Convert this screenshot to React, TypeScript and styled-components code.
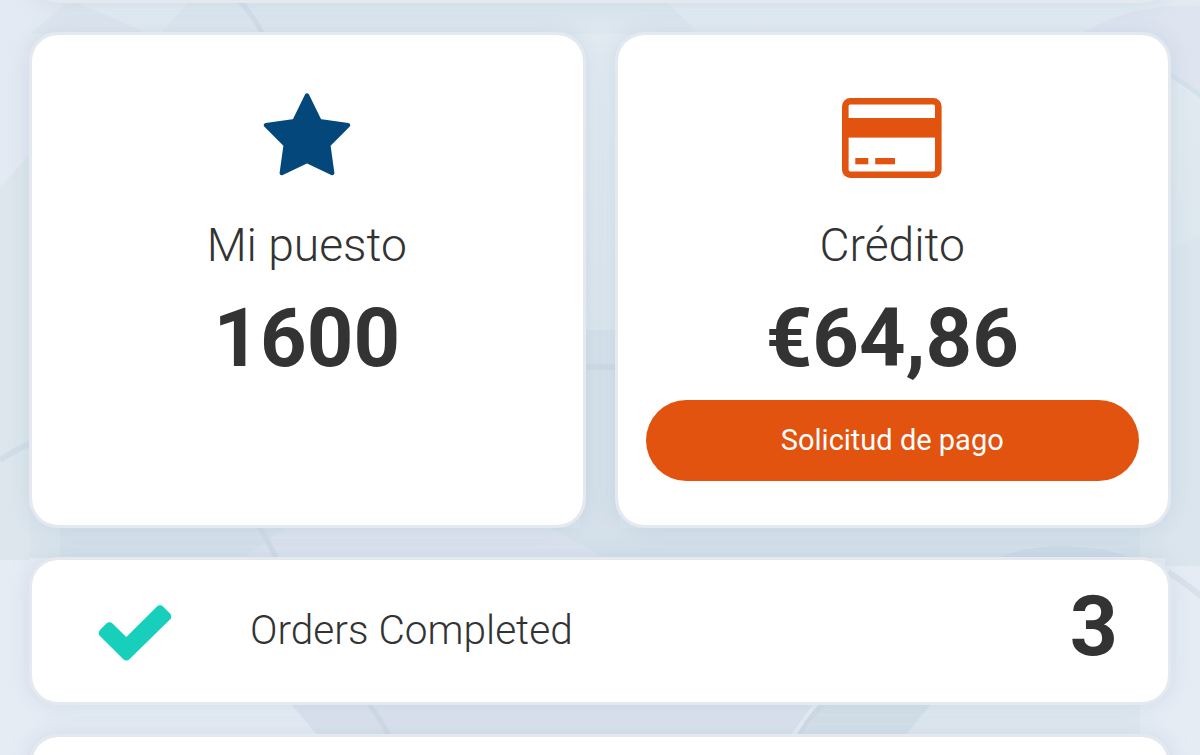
import React from 'react';
import styled, { createGlobalStyle } from 'styled-components'


const GlobalStyle = createGlobalStyle`
    body {
        margin: 0;
        overflow: hidden;
        background: #dae4ed;
        font-family: Roboto, "Liberation Sans", sans-serif;
        color: #333;
    }
`

function Backdrop() {
    return (
        <BackdropSvg viewBox="0 0 1200 755" preserveAspectRatio="none">
            <defs>
                <linearGradient id="base" x1="0" y1="0" x2="0" y2="1">
                    <stop offset="0" stopColor="#e3ebf2" />
                    <stop offset="0.5" stopColor="#dde7ee" />
                    <stop offset="1" stopColor="#d9e4ec" />
                </linearGradient>
            </defs>
            <rect width="1200" height="560" fill="url(#base)" />
            <rect y="558" width="1200" height="197" fill="#e5ecf4" />

            {/* top strip */}
            <path d="M0 0H70L148 34H30V154L0 188Z" fill="#e3eaf3" />
            <path d="M70 0L150 34H30Z" fill="#dee6ef" />
            <path d="M190 0L160 34H700L664 0Z" fill="#dde7ef" />
            <path d="M239 0Q252 14 264 36" stroke="#d3dee8" strokeWidth="5" fill="none" />
            <path d="M1080 34Q1135 2 1200 6V92L1168 74Z" fill="#dee5f0" />
            <path d="M1168 74Q1184 82 1202 97" stroke="#d5e1ea" strokeWidth="5" fill="none" />

            {/* side and middle columns */}
            <path d="M0 188L30 154V560H0Z" fill="#dde6ed" />
            <path d="M0 460Q18 448 32 443" stroke="#d1dee8" strokeWidth="6" fill="none" />
            <rect x="580" y="330" width="40" height="200" fill="#d6e1ea" />
            <rect x="580" y="364" width="40" height="6" fill="#cfdbe5" />
            <path d="M1168 250L1200 235V560H1168Z" fill="#dbe5ed" />

            {/* strip under the two cards */}
            <path d="M60 528H1140V558H60Z" fill="#d5e1ea" />
            <path d="M290 525L240 560H610L545 525Z" fill="#dce3ee" />
            <path d="M258 525Q268 540 278 562" stroke="#d0dbe6" strokeWidth="5" fill="none" />
            <path d="M990 560Q1060 532 1140 560Z" fill="#cddbe7" />
            <path d="M1165 556H1200V566H1165Z" fill="#dbe5ed" />
            <path d="M1168 572Q1184 582 1202 597" stroke="#d9e1ec" strokeWidth="6" fill="none" />

            {/* strip under the orders row */}
            <path d="M290 703L318 736H790L814 703Z" fill="#dae2ed" />
            <path d="M368 703Q380 718 390 738" stroke="#d0dbe6" strokeWidth="5" fill="none" />
            <path d="M824 703L800 738H904L932 703Z" fill="#d4e0e9" />
            <path d="M824 703Q808 718 798 738" stroke="#d0dbe6" strokeWidth="5" fill="none" />
            <path d="M932 703L904 738H1140V703Z" fill="#dfe8f0" />
        </BackdropSvg>
    )
}

function StarIcon() {
    return (
        <svg width="88" height="84" viewBox="0 0 88 84">
            <path
                d="M44 3.500L56.600 29.300L85 33.300L65.300 53L69.200 81L44 69L18.800 81L22.700 53L3 33.300L31.400 29.300Z"
                fill="#04477b"
                stroke="#04477b"
                strokeWidth="4.400"
                strokeLinejoin="round"
            />
        </svg>
    )
}

function CreditIcon() {
    return (
        <svg width="100" height="80" viewBox="0 0 100 80" fill="#e2530f">
            <rect x="3.300" y="3.300" width="93" height="73.400" rx="5" fill="none" stroke="#e2530f" strokeWidth="6.600" />
            <rect x="3" y="20" width="94" height="19.600" />
            <rect x="13.300" y="60" width="13" height="6.300" />
            <rect x="33.200" y="60" width="19.800" height="6.300" />
        </svg>
    )
}

function CheckIcon() {
    return (
        <svg width="74" height="58" viewBox="0 0 74 58">
            <path
                d="M5 29L11.500 22.500L28.400 39L62 5.500L69 12.500L28.400 52.300Z"
                fill="#17cfbb"
                stroke="#17cfbb"
                strokeWidth="8.600"
                strokeLinejoin="round"
            />
        </svg>
    )
}

function App() {
    return (
        <Page>
            <GlobalStyle />
            <Backdrop />
            <EdgeCard $side="top" />
            <CardGrid>
                <StatCard>
                    <IconBox $lift={4}><StarIcon /></IconBox>
                    <StatTitle>Mi puesto</StatTitle>
                    <StatValue>1600</StatValue>
                </StatCard>
                <StatCard>
                    <IconBox $lift={0}><CreditIcon /></IconBox>
                    <StatTitle>Crédito</StatTitle>
                    <StatValue>€64,86</StatValue>
                    <PayButton>Solicitud de pago</PayButton>
                </StatCard>
            </CardGrid>
            <OrderRow>
                <CheckIcon />
                <OrderLabel>Orders Completed</OrderLabel>
                <OrderCount>3</OrderCount>
            </OrderRow>
            <EdgeCard $side="bottom" />
        </Page>
    )
}

export default App

const Page = styled.div`
    position: relative;
    display: flex;
    flex-direction: column;
    gap: 29px;
    height: 755px;
    padding: 0 29px;
    box-sizing: border-box;
    overflow: hidden;
`

const BackdropSvg = styled.svg`
    position: absolute;
    top: 0;
    left: 0;
    width: 100%;
    height: 100%;
    z-index: -1;
`

const Card = styled.div`
    box-sizing: border-box;
    background: #fff;
    background-clip: padding-box;
    border: 3px solid #e4e9ef;
    border-radius: 29px;
    box-shadow: 0 0 22px rgba(130, 165, 195, 0.22);
`

/* Only one edge of these cards is inside the page */
const EdgeCard = styled(Card)<{ $side: 'top' | 'bottom' }>`
    flex: none;
    height: 100px;
    margin-top: ${props => props.$side === 'top' ? '-97px' : '0'};
`

const CardGrid = styled.div`
    flex: none;
    display: grid;
    grid-template-columns: 1fr 1fr;
    column-gap: 29px;
    height: 496px;
`

const StatCard = styled(Card)`
    display: flex;
    flex-direction: column;
    align-items: center;
    padding: 56px 29px 0 28px;
`

const IconBox = styled.div<{ $lift: number }>`
    display: flex;
    align-items: center;
    box-sizing: border-box;
    height: 94px;
    padding-bottom: ${props => props.$lift * 2}px;

    svg {
        display: block;
    }
`

const StatTitle = styled.div`
    margin-top: 32px;
    font-size: 46.2px;
    font-weight: 300;
    line-height: 56px;
`

const StatValue = styled.div`
    margin-top: 18px;
    font-size: 81.3px;
    font-weight: 700;
    line-height: 96px;
`

const PayButton = styled.button`
    width: 100%;
    height: 81px;
    margin-top: 13px;
    padding: 0 0 2px;
    border: none;
    border-radius: 41px;
    background: #e2530f;
    color: #fff;
    font-family: inherit;
    font-size: 29px;
`

const OrderRow = styled(Card)`
    flex: none;
    display: flex;
    align-items: center;
    height: 148px;
    padding: 3px 50px 0 66px;

    svg {
        flex: none;
    }
`

const OrderLabel = styled.div`
    flex: 1;
    margin-left: 78px;
    padding-bottom: 5px;
    font-size: 40.6px;
    font-weight: 300;
`

const OrderCount = styled.div`
    padding-bottom: 11px;
    font-size: 84px;
    font-weight: 700;
    line-height: 96px;
`
